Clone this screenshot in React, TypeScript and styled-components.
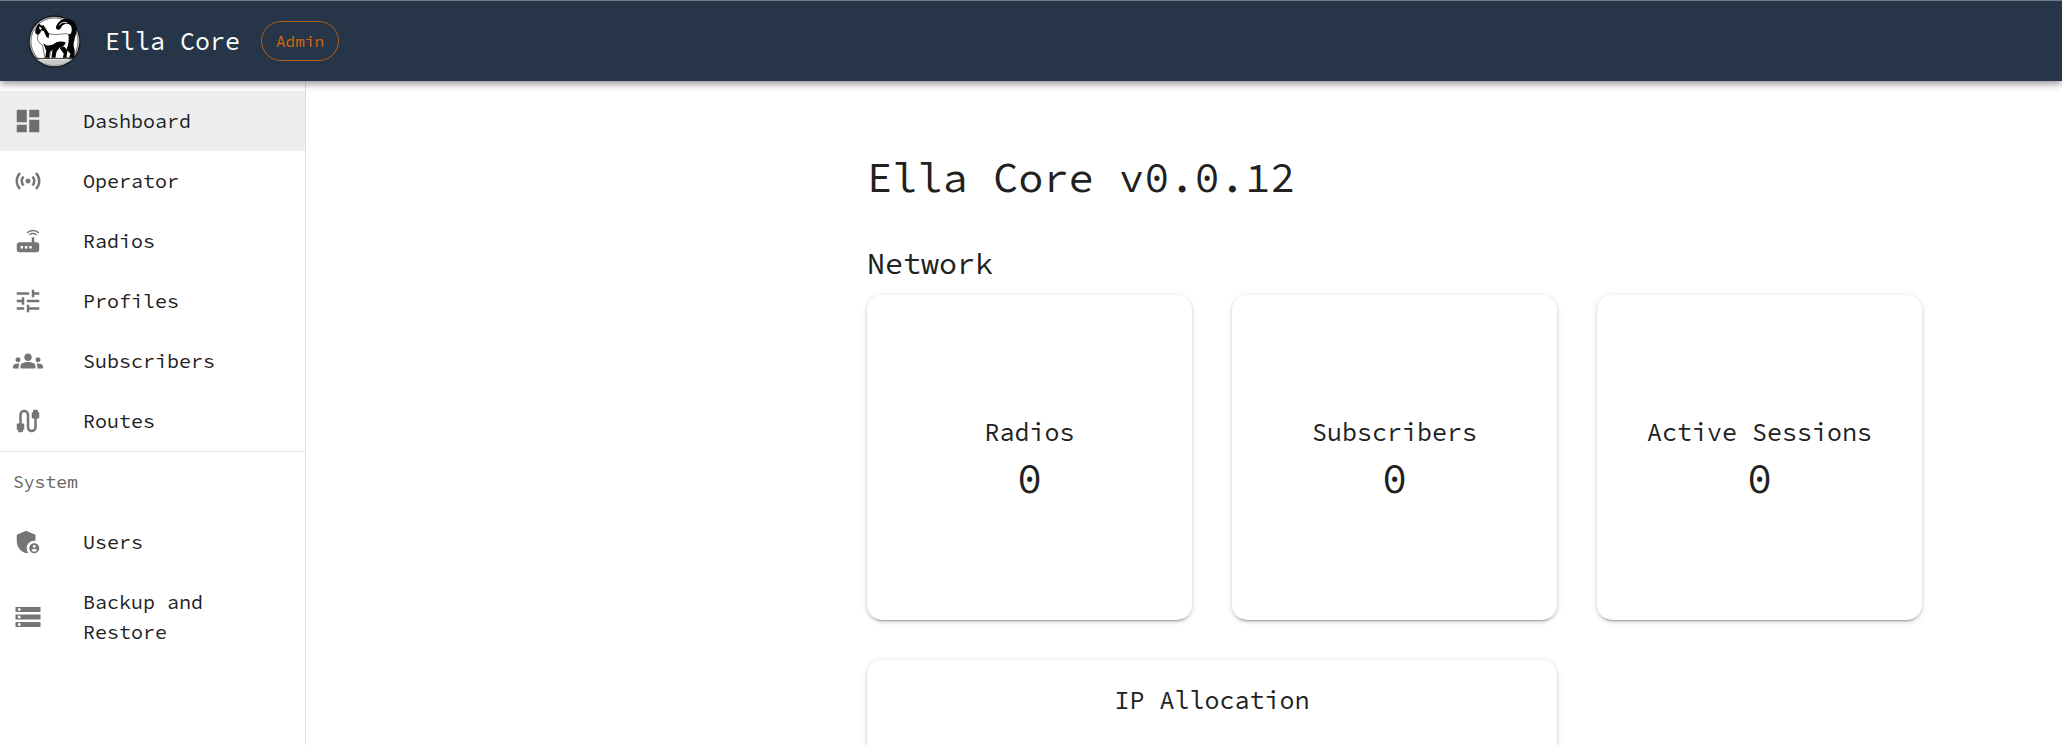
import React from "react";
import styled, { createGlobalStyle } from "styled-components";
import type { IconType } from "react-icons";
import {
  MdAdminPanelSettings,
  MdCable,
  MdDashboard,
  MdGroups,
  MdRouter,
  MdSensors,
  MdStorage,
  MdTune,
} from "react-icons/md";

const GlobalStyle = createGlobalStyle`
  *, *::before, *::after { box-sizing: border-box; }
  body {
    margin: 0;
    background: #fff;
    color: #212121;
    font-family: "Source Code Pro", "Liberation Mono", monospace;
    font-size: 20px;
    line-height: 30px;
  }
`;

const Shell = styled.div`
  display: flex;
  flex-direction: column;
  height: 100vh;
`;

const AppBar = styled.header`
  position: relative;
  z-index: 1;
  flex: none;
  display: flex;
  align-items: center;
  height: 81px;
  padding: 0 28px;
  border-top: 1px solid #6c7f87;
  background: #263648;
  color: #fff;
  box-shadow: 0 3px 5px -1px rgba(0, 0, 0, 0.2), 0 5px 6px rgba(0, 0, 0, 0.14),
    0 1px 12px rgba(0, 0, 0, 0.12);
`;

const LogoImage = styled.svg`
  flex: none;
  width: 53px;
  height: 53px;
`;

const Brand = styled.span`
  margin-left: 24px;
  font-size: 25px;
  line-height: 40px;
`;

const RoleChip = styled.button`
  height: 40px;
  margin-left: 21px;
  padding: 0 14px;
  border: 1px solid #b25c18;
  border-radius: 20px;
  background: transparent;
  color: #d9660b;
  font-family: inherit;
  font-size: 16px;
  line-height: 24px;
`;

const Body = styled.div`
  flex: 1;
  display: flex;
  min-height: 0;
`;

const Sidebar = styled.nav`
  flex: none;
  width: 306px;
  padding-top: 10px;
  border-right: 1px solid #e0e0e0;
`;

const NavList = styled.ul`
  margin: 0;
  padding: 0;
  list-style: none;

  & + & {
    border-top: 1px solid #e0e0e0;
  }
`;

const NavHeading = styled.li`
  padding: 0 13px;
  color: #666;
  font-size: 18px;
  line-height: 60px;
`;

const NavLink = styled.a<{ $active?: boolean }>`
  display: flex;
  align-items: center;
  gap: 40px;
  padding: 15px 13px;
  background: ${({ $active }) => ($active ? "#edeef0" : "transparent")};
  color: inherit;
  text-decoration: none;

  svg {
    flex: none;
    width: 30px;
    height: 30px;
    color: ${({ $active }) => ($active ? "#6d6e6f" : "#757575")};
  }
`;

const Main = styled.main`
  flex: 1;
  min-width: 0;
  padding: 70px 140px 40px 40px;
  overflow-y: auto;
  scrollbar-width: none;
`;

const Content = styled.div`
  max-width: 1055px;
  margin-left: auto;
`;

const PageTitle = styled.h1`
  margin: 0 0 40px;
  font-size: 42px;
  font-weight: 400;
  line-height: 52px;
`;

const SectionTitle = styled.h2`
  margin: 0 0 12px;
  font-size: 30px;
  font-weight: 400;
  line-height: 40px;
`;

const CardGrid = styled.div`
  display: grid;
  grid-template-columns: repeat(3, 1fr);
  gap: 40px;
`;

const Card = styled.section`
  display: flex;
  flex-direction: column;
  align-items: center;
  padding: 20px;
  border-radius: 15px;
  background: #fff;
  box-shadow: 0 4px 1px -3px rgba(0, 0, 0, 0.2), 0 2px 3px rgba(0, 0, 0, 0.14),
    0 1px 6px rgba(0, 0, 0, 0.12);
`;

const StatCard = styled(Card)`
  justify-content: center;
  aspect-ratio: 1;
`;

const ChartCard = styled(Card)`
  grid-column: span 2;
  min-height: 325px;
`;

const CardTitle = styled.h3`
  margin: 0;
  font-size: 25px;
  font-weight: 400;
  line-height: 40px;
`;

const StatValue = styled.p`
  margin: 0;
  font-size: 42px;
  line-height: 52px;
`;

type NavEntry = { label: string; icon: IconType; active?: boolean };

const networkNav: NavEntry[] = [
  { label: "Dashboard", icon: MdDashboard, active: true },
  { label: "Operator", icon: MdSensors },
  { label: "Radios", icon: MdRouter },
  { label: "Profiles", icon: MdTune },
  { label: "Subscribers", icon: MdGroups },
  { label: "Routes", icon: MdCable },
];

const systemNav: NavEntry[] = [
  { label: "Users", icon: MdAdminPanelSettings },
  { label: "Backup and Restore", icon: MdStorage },
];

const stats = [
  { label: "Radios", value: 0 },
  { label: "Subscribers", value: 0 },
  { label: "Active Sessions", value: 0 },
];

function Logo() {
  return (
    <LogoImage viewBox="24 13 160 160" aria-hidden="true">
      <circle cx="104" cy="93" r="79" fill="#15191d" />
      <circle cx="104" cy="93" r="75" fill="#b9bcbd" />
      <circle cx="104" cy="93" r="71" fill="#fff" stroke="#4a4a4a" strokeWidth="2" />
      {/* ground */}
      <path d="M50 147 H158 Q134 163 104 163 Q74 163 50 147Z" fill="#c9cbc8" />
      <path d="M44 144 H164" stroke="#333" strokeWidth="3" />
      {/* tail */}
      <path
        d="M154 84 C165 70 168 48 156 37 C142 26 122 33 116 50"
        fill="none"
        stroke="#050505"
        strokeWidth="15"
        strokeLinecap="round"
      />
      <path
        d="M118 44 C124 36 133 33 142 37"
        fill="none"
        stroke="#fff"
        strokeWidth="3"
      />
      {/* body */}
      <path
        d="M56 70 C48 84 54 97 68 104 L75 143 H88 L96 112 L126 108 L140 142 H160 L156 84 Q150 66 130 70 Q105 76 86 69 L74 52Z"
        fill="#fff"
        stroke="#333"
        strokeWidth="2"
        strokeLinejoin="round"
      />
      {/* head and nape */}
      <path d="M46 58 L52 45 L58 39 L64 45 L71 44 L80 58 L88 70 L86 84 L79 78 L72 62 L64 58 L60 68 L53 73 L46 67Z" fill="#050505" />
      <path d="M57 47 L66 53 L60 59Z" fill="#fff" />
      {/* dark coat over the legs and flank */}
      <path
        d="M70 98 L80 105 Q98 106 108 96 Q124 90 138 96 Q135 108 119 112 L110 124 L107 142 H95 L98 118 L90 124 L88 142 H76 L79 122Z"
        fill="#050505"
      />
      <path
        d="M146 72 L162 66 Q169 80 162 96 Q160 108 165 119 L164 142 H148 L152 130 L140 117 Q150 96 146 72Z"
        fill="#050505"
      />
      <path d="M119 112 L133 108 L143 120 L140 142 H129 L132 130Z" fill="#050505" />
    </LogoImage>
  );
}

function NavItem({ label, icon: Icon, active }: NavEntry) {
  return (
    <li>
      <NavLink href="#" $active={active} aria-current={active ? "page" : undefined}>
        <Icon aria-hidden="true" />
        <span>{label}</span>
      </NavLink>
    </li>
  );
}

export default function App() {
  return (
    <Shell>
      <GlobalStyle />
      <AppBar>
        <Logo />
        <Brand>Ella Core</Brand>
        <RoleChip type="button">Admin</RoleChip>
      </AppBar>
      <Body>
        <Sidebar aria-label="Main navigation">
          <NavList>
            {networkNav.map((entry) => (
              <NavItem key={entry.label} {...entry} />
            ))}
          </NavList>
          <NavList>
            <NavHeading>System</NavHeading>
            {systemNav.map((entry) => (
              <NavItem key={entry.label} {...entry} />
            ))}
          </NavList>
        </Sidebar>
        <Main>
          <Content>
            <PageTitle>Ella Core v0.0.12</PageTitle>
            <SectionTitle>Network</SectionTitle>
            <CardGrid>
              {stats.map(({ label, value }) => (
                <StatCard key={label}>
                  <CardTitle>{label}</CardTitle>
                  <StatValue>{value}</StatValue>
                </StatCard>
              ))}
              <ChartCard>
                <CardTitle>IP Allocation</CardTitle>
              </ChartCard>
            </CardGrid>
          </Content>
        </Main>
      </Body>
    </Shell>
  );
}
